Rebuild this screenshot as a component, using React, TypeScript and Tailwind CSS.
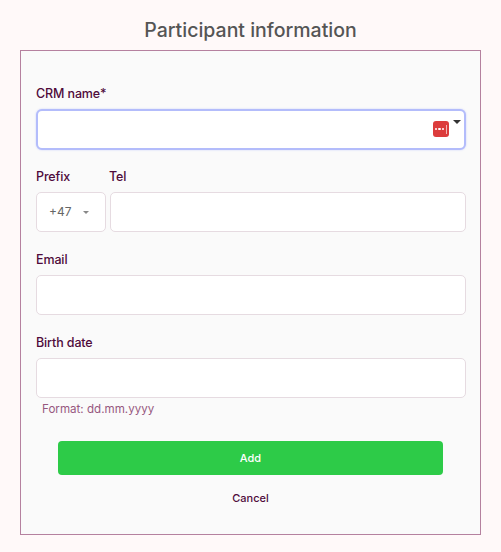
const labelCls = "block text-[12.5px] leading-[16px] font-medium tracking-[-0.01em] text-[#4f0b3b]"
const inputCls = "block h-[40px] w-full rounded-[5px] border border-[#e6dbe1] bg-white"

function Field({ label, className, labelClassName, children }: { label: string; className?: string; labelClassName?: string; children?: React.ReactNode }) {
  return (
    <div className={className}>
      <div className={`${labelCls} ${labelClassName ?? ''}`}>{label}</div>
      <div className="mt-[7px]">{children ?? <div className={inputCls} />}</div>
    </div>
  )
}

export default function App() {
  return (
    <div className="h-[552px] w-[501px] overflow-hidden bg-[#fff9f9] pt-[18px] font-['Inter',sans-serif]">
      <h1 className="text-center text-[19.5px] leading-[24px] font-medium text-[#555555]">Participant information</h1>

      <div className="mx-[20px] mt-[8px] h-[485px] border border-[#b5819f] bg-[#fafafa] pt-[35px] pr-[14px] pl-[15px]">
        {/* CRM name, focused */}
        <div>
          <div className={labelCls}>CRM name*</div>
          <div className="relative mt-[7px] h-[41px] rounded-[6px] border-2 border-[#b3bcfb] bg-white shadow-[0_0_2px_#c5ccfc]">
            <div className="absolute top-[10px] left-[395px] flex h-[16px] w-[16px] items-center justify-center gap-[1px] rounded-[3px] bg-[#dc3c3c]">
              <span className="h-[2.5px] w-[2.5px] rounded-full bg-white" />
              <span className="h-[2.5px] w-[2.5px] rounded-full bg-white" />
              <span className="h-[2.5px] w-[2.5px] rounded-full bg-white" />
              <span className="ml-[1px] h-[9px] w-[1px] bg-[#f3b5b5]" />
            </div>
            <div className="absolute top-[9px] left-[415px] h-0 w-0 border-x-[4px] border-t-[4px] border-x-transparent border-t-[#333333]" />
          </div>
        </div>

        <div className="mt-[19px] flex gap-[4px]">
          <Field label="Prefix" className="w-[70px]">
            <div className="flex h-[40px] items-center rounded-[5px] border border-[#e6dbe1] bg-white pl-[12px]">
              <span className="text-[12px] text-[#666666]">+47</span>
              <span className="ml-[12px] h-0 w-0 border-x-[3.5px] border-t-[3.5px] border-x-transparent border-t-[#888888]" />
            </div>
          </Field>
          <Field label="Tel" className="flex-1" labelClassName="-ml-px" />
        </div>

        <Field label="Email" className="mt-[20px]" />

        <Field label="Birth date" className="mt-[20px]" />
        <p className="mt-[3px] pl-[6px] text-[11.6px] leading-[16px] text-[#97587f]">Format: dd.mm.yyyy</p>

        <div className="mt-[24px] pr-[23px] pl-[22px]">
          <button className="block h-[34px] w-full rounded-[4px] bg-[#2dcb48] text-[11px] font-medium text-white">Add</button>
          <button className="mt-[15px] block w-full text-center text-[11px] leading-[16px] font-medium text-[#4f0b3b]">Cancel</button>
        </div>
      </div>
    </div>
  )
}
